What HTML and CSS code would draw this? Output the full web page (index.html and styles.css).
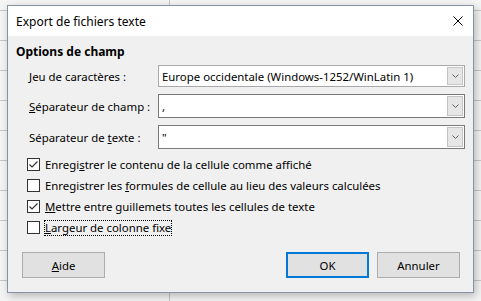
FILE: index.html
```html
<!DOCTYPE html>
<html lang="fr">
<head>
    <meta charset="UTF-8">
    <title>Export de fichiers texte</title>
    <link rel="stylesheet" href="styles.css">
</head>
<body>
    <div class="dialog">
        <div class="titlebar">
            <span class="title">Export de fichiers texte</span>
            <svg class="close" width="10" height="10" viewBox="0 0 10 10">
                <path d="M0.5 0.5 L9.5 9.5 M9.5 0.5 L0.5 9.5" stroke="#000" stroke-width="1" fill="none"/>
            </svg>
        </div>
        <div class="content">
            <h2 class="section">Options de champ</h2>
            <div class="fields">
                <label><span><u>J</u>eu de caractères :</span></label>
                <div class="combo light">
                    <span class="value">Europe occidentale (Windows-1252/WinLatin 1)</span>
                    <span class="drop"><svg width="7" height="4" viewBox="0 0 7 4"><path d="M0.5 0.5 L3.5 3.5 L6.5 0.5" stroke="#606060" fill="none"/></svg></span>
                </div>
                <label><span><u>S</u>éparateur de champ :</span></label>
                <div class="combo">
                    <span class="value">,</span>
                    <span class="drop"><svg width="7" height="4" viewBox="0 0 7 4"><path d="M0.5 0.5 L3.5 3.5 L6.5 0.5" stroke="#606060" fill="none"/></svg></span>
                </div>
                <label><span>Séparateur de <u>t</u>exte :</span></label>
                <div class="combo">
                    <span class="value">"</span>
                    <span class="drop"><svg width="7" height="4" viewBox="0 0 7 4"><path d="M0.5 0.5 L3.5 3.5 L6.5 0.5" stroke="#606060" fill="none"/></svg></span>
                </div>
            </div>
            <div class="checks">
                <div class="check">
                    <span class="box"><svg width="11" height="11" viewBox="0 0 11 11"><path d="M1.5 5.5 L4 8 L9.5 2.5" stroke="#333" stroke-width="1.2" fill="none"/></svg></span>
                    <span>Enregi<u>s</u>trer le contenu de la cellule comme affiché</span>
                </div>
                <div class="check">
                    <span class="box"></span>
                    <span>Enregistrer les <u>f</u>ormules de cellule au lieu des valeurs calculées</span>
                </div>
                <div class="check">
                    <span class="box"><svg width="11" height="11" viewBox="0 0 11 11"><path d="M1.5 5.5 L4 8 L9.5 2.5" stroke="#333" stroke-width="1.2" fill="none"/></svg></span>
                    <span><u>M</u>ettre entre guillemets toutes les cellules de texte</span>
                </div>
                <div class="check">
                    <span class="box"></span>
                    <span class="focused"><u>L</u>argeur de colonne fixe</span>
                </div>
            </div>
            <div class="buttons">
                <button class="btn"><u>A</u>ide</button>
                <div class="spacer"></div>
                <button class="btn default">OK</button>
                <button class="btn">Annuler</button>
            </div>
        </div>
    </div>
</body>
</html>
```

FILE: styles.css
```css
* {
    box-sizing: border-box;
    margin: 0;
    padding: 0;
}

body {
    font-family: 'Noto Sans', 'Open Sans', sans-serif;
    font-size: 11.4px;
    color: #000;
    width: 481px;
    height: 301px;
    overflow: hidden;
    /* spreadsheet grid behind the dialog */
    background-color: #f4f4f4;
    background-image:
        linear-gradient(90deg, transparent 169px, #c6c6c6 169px, #c6c6c6 170px, transparent 170px),
        repeating-linear-gradient(180deg, transparent 0, transparent 10px, #c6c6c6 10px, #c6c6c6 11px, transparent 11px, transparent 30px);
    padding: 5px 0 0 7px;
}

.dialog {
    width: 467px;
    height: 288px;
    border: 1px solid #8593a4;
    background: #f0f0f0;
    box-shadow: 2px 3px 8px rgba(0, 0, 0, 0.25);
    display: flex;
    flex-direction: column;
}

.titlebar {
    height: 30px;
    background: #fff;
    display: flex;
    align-items: center;
    padding: 0 0 0 8px;
}

.title {
    flex: 1;
    font-size: 12px;
}

.close {
    margin-right: 10px;
}

.content {
    flex: 1;
    padding: 8px 8px 0 8px;
}

.section {
    font-size: 12px;
    font-weight: bold;
    line-height: 16px;
    height: 16px;
}

.fields {
    display: grid;
    grid-template-columns: 129px 307px;
    grid-template-rows: 22px 24px 24px;
    row-gap: 7px;
    margin: 5px 0 0 13px;
}

.fields label {
    display: flex;
    align-items: center;
}

.combo {
    display: flex;
    align-items: stretch;
    background: #fff;
    border: 1px solid #7a7a7a;
}

.combo.light {
    border-color: #a9a9a9;
}

.combo .value {
    flex: 1;
    display: flex;
    align-items: center;
    padding-left: 3px;
}

.drop {
    width: 16px;
    margin: 1px;
    background: #e6e6e6;
    border: 1px solid #c4c4c4;
    display: flex;
    align-items: center;
    justify-content: center;
}

.checks {
    margin: 5px 0 0 11px;
}

.check {
    height: 21px;
    display: flex;
    align-items: center;
}

.box {
    width: 13px;
    height: 13px;
    border: 1px solid #333;
    background: #fff;
    margin-right: 5px;
    display: flex;
    align-items: center;
    justify-content: center;
}

.focused {
    outline: 1px dotted #000;
    line-height: 14px;
}

.buttons {
    display: flex;
    margin: 14px 5px 0 6px;
    gap: 8px;
}

.spacer {
    flex: 1;
}

.btn {
    width: 83px;
    height: 26px;
    font-family: inherit;
    font-size: 11.4px;
    background: #e1e1e1;
    border: 1px solid #adadad;
    color: #000;
}

.btn.default {
    border: 2px solid #0078d7;
}
```
